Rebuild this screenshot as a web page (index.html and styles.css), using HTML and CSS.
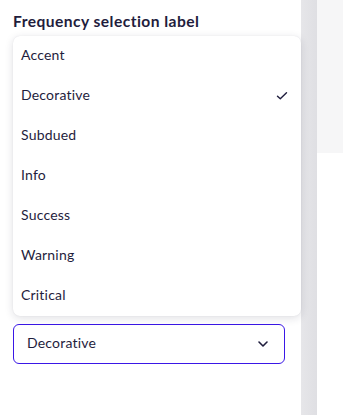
FILE: index.html
```html
<!DOCTYPE html>
<html>
<head>
<meta charset="utf-8">
<link rel="stylesheet" href="styles.css">
</head>
<body>
<div class="page">
  <div class="panel">
    <div class="label">Frequency selection label</div>
    <div class="field">
      <ul class="menu">
        <li class="item">Accent</li>
        <li class="item selected">Decorative
          <svg class="check" width="12" height="10" viewBox="0 0 12 10"><path d="M1.5 5.2 L4.3 7.8 L10.5 1.8" fill="none" stroke="#1f1d3d" stroke-width="1.4" stroke-linecap="round" stroke-linejoin="round"/></svg>
        </li>
        <li class="item">Subdued</li>
        <li class="item">Info</li>
        <li class="item">Success</li>
        <li class="item">Warning</li>
        <li class="item">Critical</li>
      </ul>
      <div class="select">
        <span>Decorative</span>
        <svg class="chev" width="12" height="8" viewBox="0 0 12 8"><path d="M2 2 L6 6 L10 2" fill="none" stroke="#1f1d3d" stroke-width="1.6" stroke-linecap="round" stroke-linejoin="round"/></svg>
      </div>
    </div>
  </div>
  <div class="divider"></div>
  <div class="side">
    <div class="side-top"></div>
  </div>
</div>
</body>
</html>
```
FILE: styles.css
```css
html, body {
  margin: 0;
  padding: 0;
  background: #ffffff;
}
body {
  font-family: Lato, "Noto Sans", sans-serif;
  color: #1f1d3d;
}
.page {
  display: flex;
  height: 415px;
  width: 343px;
  overflow: hidden;
}
.panel {
  width: 301px;
  flex: none;
  background: #fff;
  padding: 11px 0 0 13px;
  box-sizing: border-box;
  position: relative;
  z-index: 2;
}
.label {
  font-size: 15.6px;
  font-weight: 700;
  line-height: 21px;
  letter-spacing: 0.45px;
}
.field {
  position: relative;
  padding-top: 292px;
}
.menu {
  position: absolute;
  top: 4px;
  left: 0;
  width: 288px;
  margin: 0;
  padding: 0;
  list-style: none;
  background: #fff;
  border-radius: 7px;
  box-shadow: 0 2px 8px rgba(30, 30, 60, 0.14), 0 0 1px rgba(30,30,60,0.12);
  z-index: 3;
}
.item {
  height: 40px;
  box-sizing: border-box;
  display: flex;
  align-items: center;
  justify-content: space-between;
  padding: 0 10px 3px 8px;
  font-size: 14px;
  letter-spacing: 0.2px;
}
.check {
  margin-right: 3px;
  margin-top: 2px;
}
.select {
  width: 272px;
  height: 40px;
  box-sizing: border-box;
  border: 1px solid #3a17e6;
  border-radius: 6px;
  display: flex;
  align-items: center;
  justify-content: space-between;
  padding: 0 15px 3px 13px;
  font-size: 14px;
  letter-spacing: 0.2px;
}
.chev {
  margin-top: 3px;
}
.divider {
  width: 16px;
  flex: none;
  background: linear-gradient(to right, #e6e6e9, #dfdfe3);
}
.side {
  flex: 1;
  background: #fff;
}
.side-top {
  height: 153px;
  background: #f6f6f7;
}
```
